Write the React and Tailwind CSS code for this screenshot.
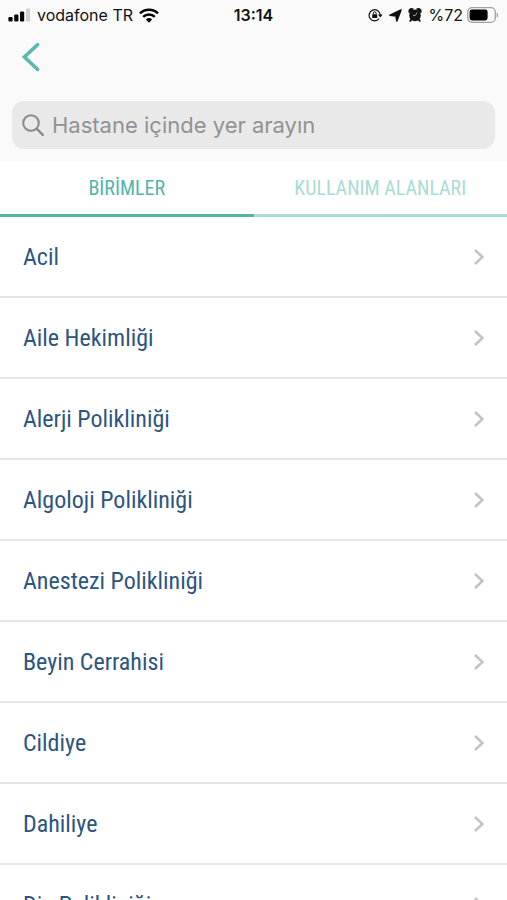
import React, { useState } from "react";

const units = [
  "Acil",
  "Aile Hekimliği",
  "Alerji Polikliniği",
  "Algoloji Polikliniği",
  "Anestezi Polikliniği",
  "Beyin Cerrahisi",
  "Cildiye",
  "Dahiliye",
  "Diş Polikliniği",
];

function SignalIcon() {
  return (
    <svg width="23" height="14" viewBox="0 0 23 14" fill="#000">
      <rect x="0.4" y="9" width="4.2" height="4.4" rx="1.2" />
      <rect x="6.2" y="6.6" width="4.2" height="6.8" rx="1.2" />
      <rect x="12" y="3.4" width="4.2" height="10" rx="1.2" />
      <rect x="18" y="0.4" width="4.2" height="13" rx="1.2" fill="#cfcfcf" />
    </svg>
  );
}

function WifiIcon() {
  return (
    <svg width="20" height="15" viewBox="0 0 20 15" fill="none" stroke="#000" strokeWidth="2.6">
      <path d="M1 5.4a12.9 12.9 0 0 1 18 0" />
      <path d="M4.2 8.9a8.3 8.3 0 0 1 11.6 0" />
      <path d="M10 14.8 6.9 11.5a4.6 4.6 0 0 1 6.2 0z" fill="#000" stroke="none" />
    </svg>
  );
}

function RotationLockIcon() {
  return (
    <svg width="15" height="14" viewBox="0 0 15 14" fill="none" stroke="#111" strokeWidth="1.2">
      <path d="M11.2 10.7A5.6 5.6 0 1 1 12.3 7" />
      <path d="M10 6.4h4.6l-2.3 3z" fill="#111" stroke="none" />
      <rect x="4.2" y="6.2" width="5" height="3.8" rx="0.6" fill="#111" stroke="none" />
      <path d="M5.3 6.4V5.2a1.4 1.4 0 0 1 2.8 0v1.2" strokeWidth="1" />
    </svg>
  );
}

function LocationIcon() {
  return (
    <svg width="13" height="13" viewBox="0 0 13 13" fill="#111">
      <path d="M12 1 7.8 12 7 6.9 1 6.2z" stroke="#111" strokeWidth="1.6" strokeLinejoin="round" />
    </svg>
  );
}

function AlarmIcon() {
  return (
    <svg width="14" height="14" viewBox="0 0 14 14" fill="#111">
      <circle cx="7" cy="7.4" r="5.8" />
      <path d="M1.4 3.8A2.2 2.2 0 0 1 4.4 1.2zM12.6 3.8A2.2 2.2 0 0 0 9.6 1.2z" stroke="#111" strokeWidth="1.8" />
      <path d="m3.4 11.2-1 1.6M10.6 11.2l1 1.6" stroke="#111" strokeWidth="2" strokeLinecap="round" />
      <path d="M8.8 5 7.2 7.6H5.4" fill="none" stroke="#ccc" strokeWidth="0.8" strokeLinecap="round" />
    </svg>
  );
}

function BatteryIcon() {
  return (
    <svg width="32" height="16" viewBox="0 0 32 16">
      <rect x="0.7" y="0.7" width="27.6" height="14.6" rx="4.4" fill="none" stroke="#a3a3a3" strokeWidth="1.3" />
      <rect x="2.6" y="2.6" width="18" height="10.8" rx="2.4" fill="#000" />
      <path d="M29.6 5.4c2 .8 2 4.4 0 5.2z" fill="#a3a3a3" />
    </svg>
  );
}

function StatusBar() {
  return (
    <div className="grid grid-cols-3 items-center h-[30px] px-2 text-[#111] font-['Inter',sans-serif]">
      <div className="flex items-center">
        <SignalIcon />
        <span className="mx-1.5 text-base whitespace-nowrap">vodafone TR</span>
        <WifiIcon />
      </div>
      <span className="text-center text-base font-semibold">13:14</span>
      <div className="flex items-center justify-end gap-1.5">
        <RotationLockIcon />
        <LocationIcon />
        <AlarmIcon />
        <div className="flex items-center gap-1">
          <span className="text-base">%72</span>
          <BatteryIcon />
        </div>
      </div>
    </div>
  );
}

function SearchBox() {
  const [query, setQuery] = useState("");

  return (
    <label className="mx-3 flex items-center h-12 px-2.5 rounded-xl bg-[#e9e9e9]">
      <svg width="22" height="22" viewBox="0 0 22 22" fill="none" stroke="#8a8a8d" strokeWidth="2" strokeLinecap="round">
        <circle cx="9" cy="9" r="7.8" />
        <path d="m14.8 14.8 6 6" strokeWidth="2.4" />
      </svg>
      <input
        type="text"
        value={query}
        onChange={(e) => setQuery(e.target.value)}
        placeholder="Hastane içinde yer arayın"
        aria-label="Hastane içinde yer arayın"
        className="ml-2 flex-1 min-w-0 bg-transparent outline-none text-[22px] text-gray-800 placeholder:text-[#929294] font-['Inter',sans-serif]"
      />
    </label>
  );
}

function Tab({ label, active, onClick }) {
  return (
    <button
      type="button"
      role="tab"
      aria-selected={active}
      onClick={onClick}
      className={
        active
          ? "flex-1 h-14 pt-px border-b-3 border-[#52b5ab] text-[#52b5ab] text-xl"
          : "flex-1 h-14 pt-px border-b-3 border-[#a9dcd5] text-[#a9dcd5] text-xl"
      }
    >
      {label}
    </button>
  );
}

function UnitRow({ name }) {
  return (
    <li className="border-b-2 border-[#e6e6e8]">
      <a href="#" className="flex items-center justify-between h-[79px] pl-[23px] pr-[22px]">
        <span className="text-2xl text-[#2d557f]">{name}</span>
        <svg width="12" height="18" viewBox="0 0 12 18" fill="none" stroke="#c4c4c6" strokeWidth="2.6">
          <path d="m2 2 7.4 7L2 16" />
        </svg>
      </a>
    </li>
  );
}

function App() {
  const [tab, setTab] = useState("units");

  return (
    <div className="h-screen flex flex-col overflow-hidden bg-white font-['Roboto_Condensed','Liberation_Sans_Narrow','Roboto',sans-serif]">
      <header className="bg-[#fafafa] pb-3">
        <StatusBar />
        <div className="flex items-center h-[71px] pb-[18px] pl-[21px]">
          <button type="button" aria-label="Geri">
            <svg width="20" height="30" viewBox="0 0 20 30" fill="none" stroke="#5bbab0" strokeWidth="3.6" strokeLinecap="round">
              <path d="M16.6 2.6 3.4 15l13.2 12.4" />
            </svg>
          </button>
        </div>
        <SearchBox />
      </header>

      <div role="tablist" className="flex">
        <Tab label="BİRİMLER" active={tab === "units"} onClick={() => setTab("units")} />
        <Tab label="KULLANIM ALANLARI" active={tab === "areas"} onClick={() => setTab("areas")} />
      </div>

      <ul className="flex-1 overflow-y-auto [scrollbar-width:none]">
        {units.map((name) => (
          <UnitRow key={name} name={name} />
        ))}
      </ul>
    </div>
  );
}

export default App;
